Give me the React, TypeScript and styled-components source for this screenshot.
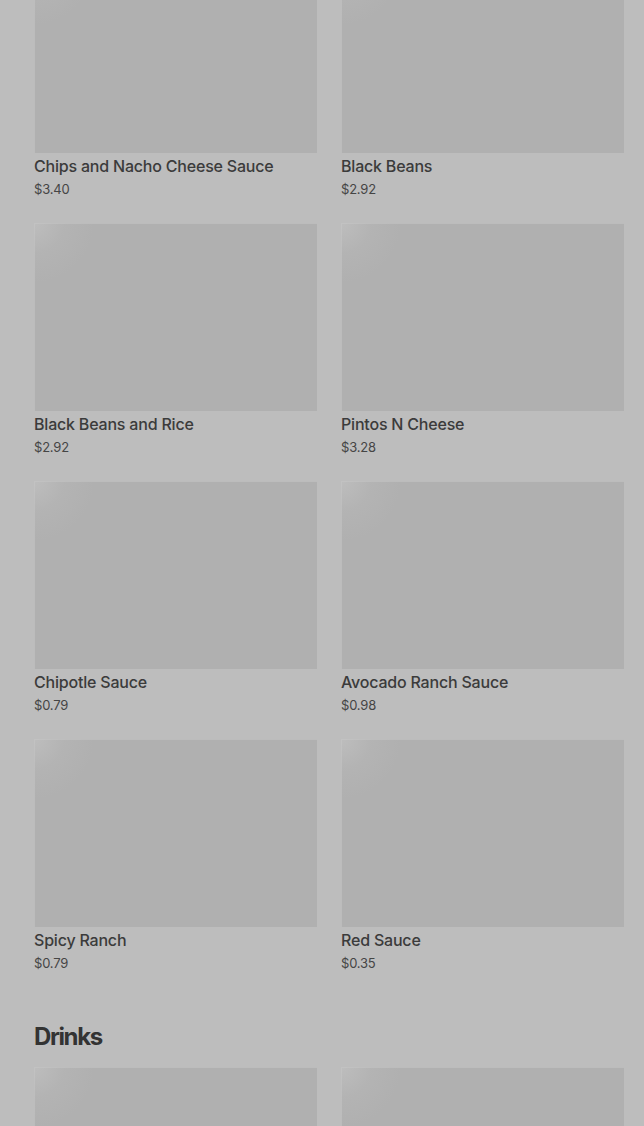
import React from "react";
import styled, { createGlobalStyle } from "styled-components";

const GlobalStyle = createGlobalStyle`
  html, body {
    margin: 0;
    padding: 0;
    background: #bdbdbd;
    overflow: hidden;
  }
  body {
    font-family: Inter, "Liberation Sans", sans-serif;
    color: #3a3a3a;
  }
`;

interface MenuItem {
  name: string;
  price: string;
}

const sides: MenuItem[] = [
  { name: "Chips and Nacho Cheese Sauce", price: "$3.40" },
  { name: "Black Beans", price: "$2.92" },
  { name: "Black Beans and Rice", price: "$2.92" },
  { name: "Pintos N Cheese", price: "$3.28" },
  { name: "Chipotle Sauce", price: "$0.79" },
  { name: "Avocado Ranch Sauce", price: "$0.98" },
  { name: "Spicy Ranch", price: "$0.79" },
  { name: "Red Sauce", price: "$0.35" },
];

// drinks section is only partly scrolled into view
const drinks: MenuItem[] = [
  { name: "", price: "" },
  { name: "", price: "" },
];

const Page = styled.div`
  width: 644px;
  height: 1126px;
  overflow: hidden;
  padding: 0 20px 0 34px;
  box-sizing: border-box;
`;

const Scroller = styled.div`
  margin-top: -35px;
`;

const Section = styled.section`
  display: flex;
  flex-direction: column;
`;

const Heading = styled.h2`
  margin: 49px 0 14px;
  font-size: 24px;
  line-height: 32px;
  font-weight: 700;
  letter-spacing: -1.4px;
  color: #333333;
`;

const Grid = styled.div`
  display: grid;
  grid-template-columns: 283px 283px;
  column-gap: 24px;
  row-gap: 25px;
`;

const Card = styled.div`
  display: flex;
  flex-direction: column;
`;

const Thumb = styled.div`
  height: 188px;
  background: radial-gradient(
      circle at 0 0,
      rgba(200, 200, 200, 0.55) 0,
      rgba(190, 190, 190, 0.25) 30px,
      rgba(176, 176, 176, 0) 60px
    ),
    #b0b0b0;
  box-shadow: inset 1px 1px 0 rgba(200, 200, 200, 0.5);
`;

const Name = styled.div`
  margin-top: 3px;
  font-size: 16px;
  line-height: 20px;
  font-weight: 500;
  letter-spacing: -0.2px;
  color: #3b3b3b;
`;

const Price = styled.div`
  margin-top: 4px;
  font-size: 13px;
  line-height: 18px;
  letter-spacing: -0.2px;
  color: #454545;
`;

function ItemCard({ item }: { item: MenuItem }) {
  return (
    <Card>
      <Thumb />
      {item.name && <Name>{item.name}</Name>}
      {item.price && <Price>{item.price}</Price>}
    </Card>
  );
}

export default function App() {
  return (
    <>
      <GlobalStyle />
      <Page>
        <Scroller>
          <Section>
            <Grid>
              {sides.map((item, i) => (
                <ItemCard key={i} item={item} />
              ))}
            </Grid>
          </Section>
          <Section>
            <Heading>Drinks</Heading>
            <Grid>
              {drinks.map((item, i) => (
                <ItemCard key={i} item={item} />
              ))}
            </Grid>
          </Section>
        </Scroller>
      </Page>
    </>
  );
}
